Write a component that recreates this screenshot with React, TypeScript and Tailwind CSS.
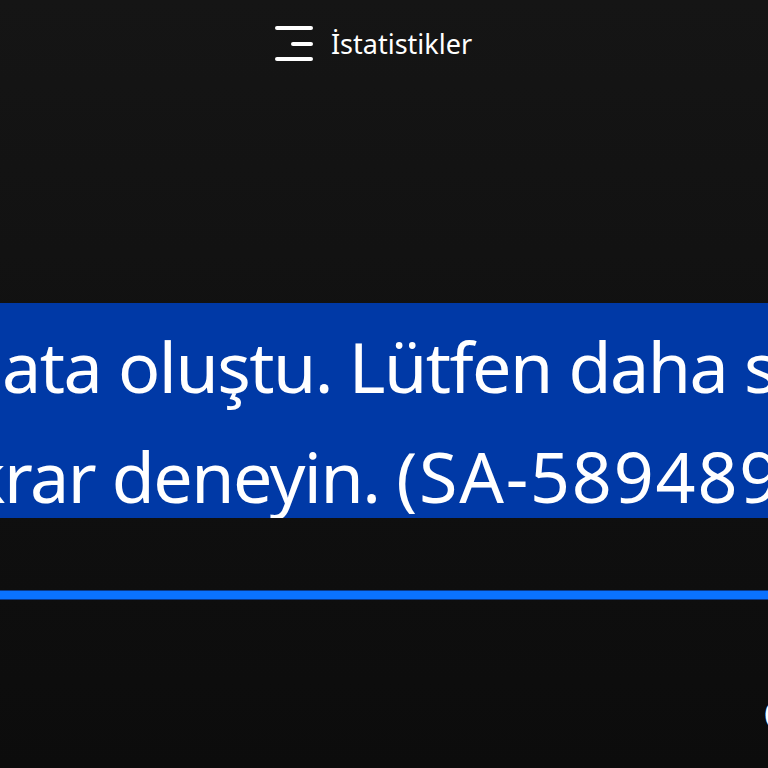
import React from 'react'

const font = { fontFamily: '"Noto Sans", "Open Sans", sans-serif' }

const StatsIcon: React.FC = () => (
  <svg width="40" height="40" viewBox="0 0 40 40" fill="none">
    <line x1="3" y1="5" x2="37" y2="5" stroke="white" strokeWidth="4" strokeLinecap="round" />
    <line x1="19" y1="21" x2="37" y2="21" stroke="white" strokeWidth="4" strokeLinecap="round" />
    <line x1="3" y1="36" x2="37" y2="36" stroke="white" strokeWidth="4" strokeLinecap="round" />
  </svg>
)

const App: React.FC = () => {
  return (
    <div
      className="w-[768px] h-[768px] overflow-hidden bg-gradient-to-b from-[#151515] to-[#0c0c0c] flex flex-col text-white"
      style={font}
    >
      {/* başlık */}
      <div className="flex items-center justify-center gap-[17px] pt-[22px] h-[64px] pr-[22px]">
        <StatsIcon />
        <span className="text-[27px] leading-none">İstatistikler</span>
      </div>

      {/* hata mesajı: metin kutudan taşıyor, kenarlarda kesiliyor */}
      <div className="mt-[239px] h-[215px] bg-[#0039a6] overflow-hidden pt-[8px] text-[70px] leading-[110px]">
        <div className="flex whitespace-nowrap h-[110px] items-center pl-[2px] tracking-[-1.5px]">
          <span className="w-0 flex justify-end">Bir h</span>
          <span>ata oluştu. Lütfen daha sonra</span>
        </div>
        <div className="flex whitespace-nowrap h-[110px] items-center -ml-[32px]">
          <span className="w-0 flex justify-end tracking-[-1.5px]">te</span>
          <span className="tracking-[-1.5px]">krar deneyin.&nbsp;</span>
          <span className="tracking-[1.8px]">(SA-5894897)</span>
        </div>
      </div>

      {/* ilerleme çubuğu */}
      <div className="mt-[72px] h-[10px] bg-[#0a72ff] border-y border-[#0b3a8a]" />

      {/* alt kısım */}
      <div className="flex mt-[94px] h-[40px]">
        <div className="flex-1" />
        <div className="w-[5px] overflow-hidden text-[42px] leading-[40px]">O</div>
      </div>
    </div>
  )
}

export default App
